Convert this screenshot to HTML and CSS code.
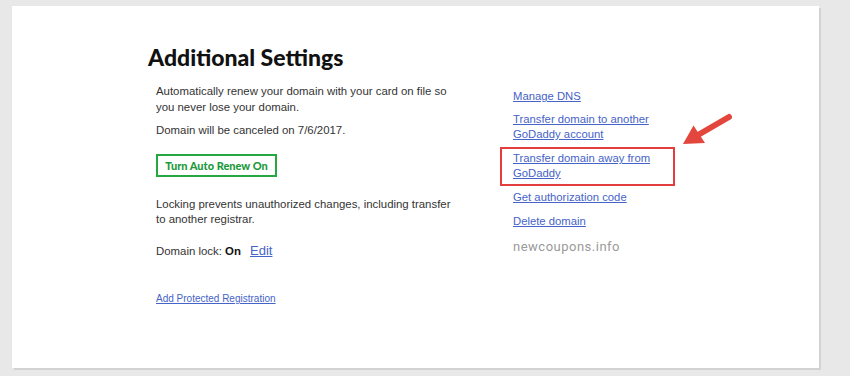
FILE: index.html
```html
<!DOCTYPE html>
<html>
<head>
<meta charset="utf-8">
<link rel="stylesheet" href="styles.css">
</head>
<body>
<div class="panel">
  <div class="content">
    <h1 class="title">Additional Settings</h1>
    <div class="cols">
      <div class="left">
        <p class="txt p1">Automatically renew your domain with your card on file so you never lose your domain.</p>
        <p class="txt p2">Domain will be canceled on 7/6/2017.</p>
        <button class="btn">Turn Auto Renew On</button>
        <p class="txt p3">Locking prevents unauthorized changes, including transfer to another registrar.</p>
        <p class="txt p4">Domain lock: <b>On</b> <a class="edit" href="#">Edit</a></p>
        <p class="p5"><a class="small" href="#">Add Protected Registration</a></p>
      </div>
      <div class="right">
        <a class="lnk l1" href="#">Manage DNS</a>
        <a class="lnk l2" href="#">Transfer domain to another<br>GoDaddy account</a>
        <div class="hl"><a class="lnk" href="#">Transfer domain away from<br>GoDaddy</a></div>
        <a class="lnk l4" href="#">Get authorization code</a>
        <a class="lnk l5" href="#">Delete domain</a>
        <span class="wm">newcoupons.info</span>
      </div>
    </div>
  </div>
  <svg class="arrow" width="80" height="60" viewBox="670 100 80 60">
    <line x1="729" y1="117" x2="698" y2="135" stroke="#e2463d" stroke-width="6" stroke-linecap="round"/>
    <polygon points="683,144 693.5,125.5 705,143" fill="#e2463d"/>
  </svg>
</div>
</body>
</html>
```

FILE: styles.css
```css
html, body {
  margin: 0;
  padding: 0;
}
body {
  background: #e8e8e8;
  padding: 6px 0 0 12px;
  height: 376px;
  box-sizing: border-box;
  overflow: hidden;
}
.panel {
  position: relative;
  width: 807px;
  height: 362px;
  background: #fff;
  box-shadow: 2px 2px 0 #d2d2d2;
}
.content {
  padding: 38px 0 0 136px;
}
.title {
  margin: 0;
  font-family: "Lato", sans-serif;
  font-weight: 900;
  font-size: 23px;
  line-height: 26px;
  color: #111;
  height: 39px;
}
.cols {
  display: grid;
  grid-template-columns: 344px 200px;
  margin-left: 8px;
}
.left, .right {
  display: flex;
  flex-direction: column;
  align-items: flex-start;
}
.txt {
  margin: 0;
  font-family: "Liberation Sans", Arial, sans-serif;
  font-size: 11.4px;
  line-height: 16px;
  color: #333;
}
.p1 { width: 300px; }
.p2 { margin-top: 7px; }
.btn {
  margin-top: 16px;
  height: 23px;
  width: 121px;
  padding: 0;
  border: 2px solid #25a842;
  background: #fff;
  color: #1c9a3c;
  font-family: "Lato", sans-serif;
  font-weight: 900;
  font-size: 11px;
}
.p3 { margin-top: 20px; line-height: 15px; width: 300px; }
.p4 { margin-top: 16px; }
.p4 b { color: #111; }
.edit {
  margin-left: 6px;
  font-size: 13px;
  color: #4663c8;
}
.p5 {
  margin: 31px 0 0;
  line-height: 14px;
}
.small {
  font-family: "Liberation Sans", Arial, sans-serif;
  font-size: 10px;
  color: #4663c8;
}
.lnk {
  display: block;
  font-family: "Liberation Sans", Arial, sans-serif;
  font-size: 11.3px;
  line-height: 15px;
  color: #4663c8;
  margin-left: 13px;
}
.l1 { margin-top: 5px; line-height: 16px; }
.l2 { margin-top: 8px; }
.hl {
  margin-top: 5px;
  width: 175px;
  box-sizing: border-box;
  border: 2px solid #e33d3d;
  padding: 2px 0 3px 11px;
}
.hl .lnk { margin-left: 0; }
.l4 { margin-top: 3px; line-height: 16px; }
.l5 { margin-top: 8px; line-height: 16px; }
.wm {
  margin: 10px 0 0 13px;
  font-family: "Roboto", sans-serif;
  font-size: 13px;
  line-height: 16px;
  letter-spacing: 0.5px;
  color: #9a9a9a;
}
.arrow {
  position: absolute;
  left: 658px;
  top: 94px;
}
```
